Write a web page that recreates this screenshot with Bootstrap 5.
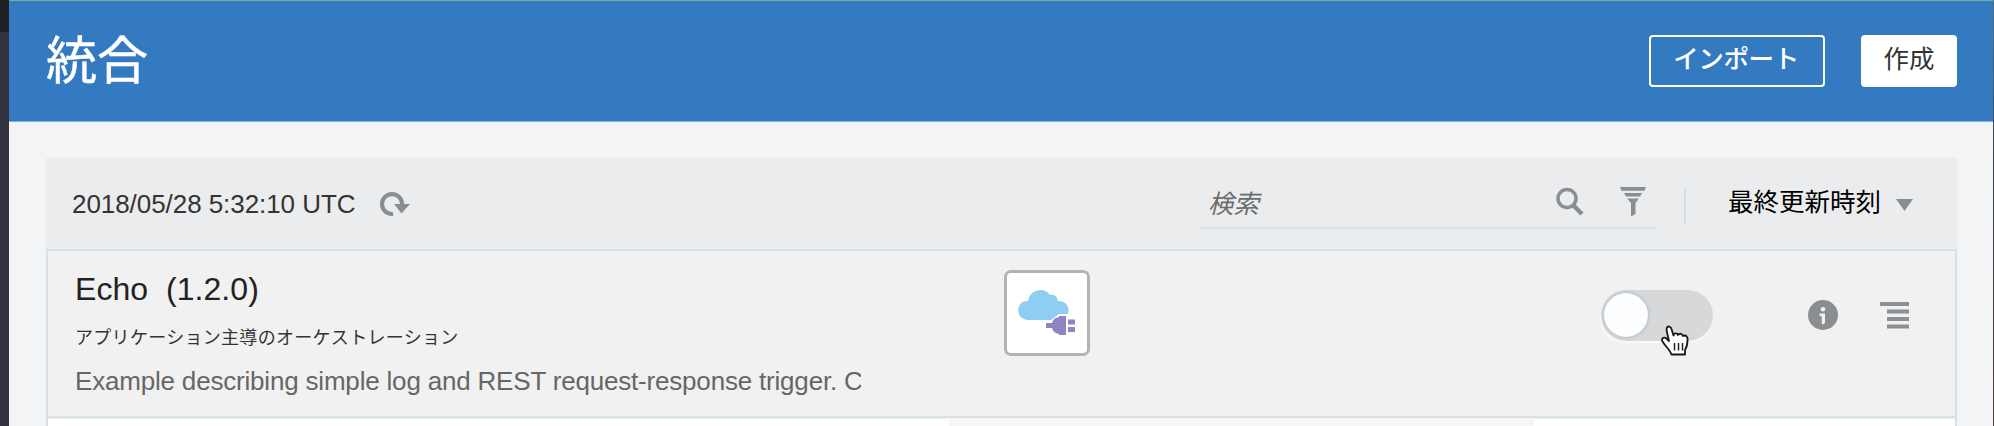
<!DOCTYPE html>
<html lang="ja">
<head>
<meta charset="utf-8">
<title>統合</title>
<link href="https://cdn.jsdelivr.net/npm/bootstrap@5.3.0/dist/css/bootstrap.min.css" rel="stylesheet">
<style>
body{width:1994px;height:426px;overflow:hidden;background:#f3f4f6;font-family:"Liberation Sans","Noto Sans CJK JP",sans-serif;color:#333}
svg{display:block;flex:none}
.rail{width:9px;background:linear-gradient(#202124 32px,#33323f 32px)}
.edge{width:1px;background:linear-gradient(#566c84,#39414d 40%,#583f3b)}
.page-head{height:122px;background:#347ac0;border-top:1px solid #79ac9e;border-bottom:1px solid #82b2e2;padding:0 36px 0 37px}
.page-title{font-size:51px;line-height:60px;color:#fff;margin:2px 0 0;font-weight:400;-webkit-text-stroke:.5px #fff}
.page-head .btn{height:52px;border-radius:4px;font-size:25.5px;line-height:41px;padding:0 0 4px;border:2px solid #fff}
.page-head .btn-import{width:176px;color:#fff;font-weight:500;letter-spacing:-.4px;padding-right:2px}
.page-head .btn-create{width:96px;background:#fff;color:#333;margin-left:36px}
.panel{margin:36px 36px 0 37px}
.tools{height:91px;background:#ebecee;padding:0 44px 0 26px}
.stamp{font-size:26px;letter-spacing:-.06px;line-height:30px;width:308px;margin-top:1px}
.find{width:456px;height:42px;border-bottom:2px solid #d7e0e8;padding:0 10px;margin-top:9px}
.find-hint{font-size:25.5px;line-height:34px;font-style:italic;color:#6b6d6f;margin-left:-2px}
.rule{width:2px;height:37px;background:#d6dee7;margin:5px 43px 0 28px}
.sorter{font-size:25.5px;line-height:30px;color:#000;margin:-4px 15px 0 -1px}
.entry{height:169px;background:#f1f1f1;border:2px solid #d6e0e8;margin:0}
.entry-text{width:786px;margin-left:27px;overflow:hidden;white-space:nowrap;padding-top:18px}
.entry-name{font-size:32px;line-height:40px;color:#222;letter-spacing:.05px;white-space:pre}
.entry-kind{font-size:18px;letter-spacing:.3px;line-height:24px;margin-top:17px}
.entry-note{font-size:26px;line-height:30px;letter-spacing:-.19px;color:#666;margin-top:16px}
.tile{width:86px;height:86px;border:3px solid #b3b3b3;border-radius:7px;background:#fff;margin:19px 0 0 143px}
.switch-track{width:112px;height:51px;border-radius:26px;background:#d6d8d9;padding:3px;margin:39px 0 0 511px;box-shadow:-1px 2px 2px #fafafa}
.switch-knob{width:44px;height:44px;border-radius:50%;background:#fbfdff;box-shadow:0 0 3px 1px #b5bec5}
.pointer{position:absolute;left:58px;top:35px}
.next-entry{height:9px;background:#fff;border:solid #d6e0e8;border-width:0 2px;box-shadow:inset 0 1px 1px #eceeef}
.next-fill{width:585px;margin-left:901px;background:#f6f6f6}
</style>
<script src="https://cdn.jsdelivr.net/npm/bootstrap@5.3.0/dist/js/bootstrap.bundle.min.js"></script>
</head>
<body class="d-flex">
<div class="rail"></div>
<main class="flex-grow-1">
  <header class="page-head d-flex align-items-center">
    <h1 class="page-title">統合</h1>
    <button class="btn btn-import ms-auto">インポート</button>
    <button class="btn btn-create">作成</button>
  </header>
  <section class="panel">
    <div class="tools d-flex align-items-center">
      <div class="stamp">2018/05/28 5:32:10 UTC</div>
      <svg width="30" height="30" viewBox="0 0 30 30"><path d="M13 25A10 10 0 1 1 22 15.500" fill="none" stroke="#8a8d90" stroke-width="4.200"/><path d="M14 15H30L21.500 24.500z" fill="#8a8d90"/></svg>
      <div class="find d-flex ms-auto">
        <span class="find-hint">検索</span>
        <svg class="ms-auto" width="28" height="30" viewBox="0 0 28 30" style="margin-right:36px"><circle cx="11" cy="11.500" r="9" fill="none" stroke="#8b8e90" stroke-width="3.500"/><path d="M17 18L26 27" stroke="#8b8e90" stroke-width="4.500"/></svg>
        <svg width="26" height="30" viewBox="0 0 26 30" fill="#8b8e90"><path d="M0 0H26L24.500 3.800H1.500zM4 6H22L20 9.500H6zM7 11.500H19L15.500 16V27L11 29.500V16z"/></svg>
      </div>
      <div class="rule"></div>
      <div class="sorter">最終更新時刻</div>
      <svg width="17" height="13" viewBox="0 0 17 13" style="margin-top:4px"><path d="M0 0H17L8.500 12z" fill="#8a8d90"/></svg>
    </div>
    <div class="entry d-flex align-items-start">
      <div class="entry-text">
        <div class="entry-name">Echo  (1.2.0)</div>
        <div class="entry-kind">アプリケーション主導のオーケストレーション</div>
        <div class="entry-note">Example describing simple log and REST request-response trigger. C</div>
      </div>
      <div class="tile">
        <svg width="80" height="80" viewBox="1007 273 80 80"><path d="M1028 320C1014 319 1016 300 1028 301C1030 288 1046 287 1050 295C1055 294 1057 297 1058 301C1067 301 1070 308 1068 314H1059L1051 320z" fill="#8fcdf2"/><path d="M1046 323H1052Q1053 318 1059 317V316H1066V335H1059V334Q1053 333 1052 328H1046zM1068 319.500H1075V324.500H1068zM1068 327H1075V332H1068z" fill="#8e85c1"/></svg>
      </div>
      <div class="switch-track position-relative">
        <div class="switch-knob"></div>
        <svg class="pointer" width="32" height="34" viewBox="0 0 32 34"><path d="M8 2.500C9.500 .5 12 2 12.500 4L14.500 10.500C15 7.500 18.500 8 19 10C20.500 8 23.500 8.500 24 11C27 9.500 29 12 28.500 15C28.500 20 28 22 26 25V29.500H12.500C11 25 7 22 3.500 16.500C2 13 5 11.500 7.500 13.500L10 16L7.500 5Z" fill="#fff" stroke="#171717" stroke-width="1.800" stroke-linejoin="round"/><path d="M15.500 18V25.500M19.500 18V25.500M23.500 18V25.500" stroke="#222" stroke-width="1.500"/></svg>
      </div>
      <svg width="30" height="30" viewBox="0 0 30 30" style="margin:49px 0 0 95px"><circle cx="15" cy="15" r="15" fill="#8b8e90"/><circle cx="15" cy="9.300" r="2.300" fill="#f1f1f1"/><path d="M11.500 13.500H17V22Q17 25 13.800 24V16.500L11.500 15.500z" fill="#f1f1f1"/></svg>
      <svg width="29" height="28" viewBox="0 0 29 28" style="margin:51px 0 0 42px" fill="#8d9092"><path d="M0 0H29V4H0zM7 7.500H29V11.500H7zM7 15H29V19H7zM7 22.500H29V26.500H7z"/></svg>
    </div>
    <div class="next-entry d-flex"><div class="next-fill"></div></div>
  </section>
</main>
<div class="edge"></div>
</body>
</html>
